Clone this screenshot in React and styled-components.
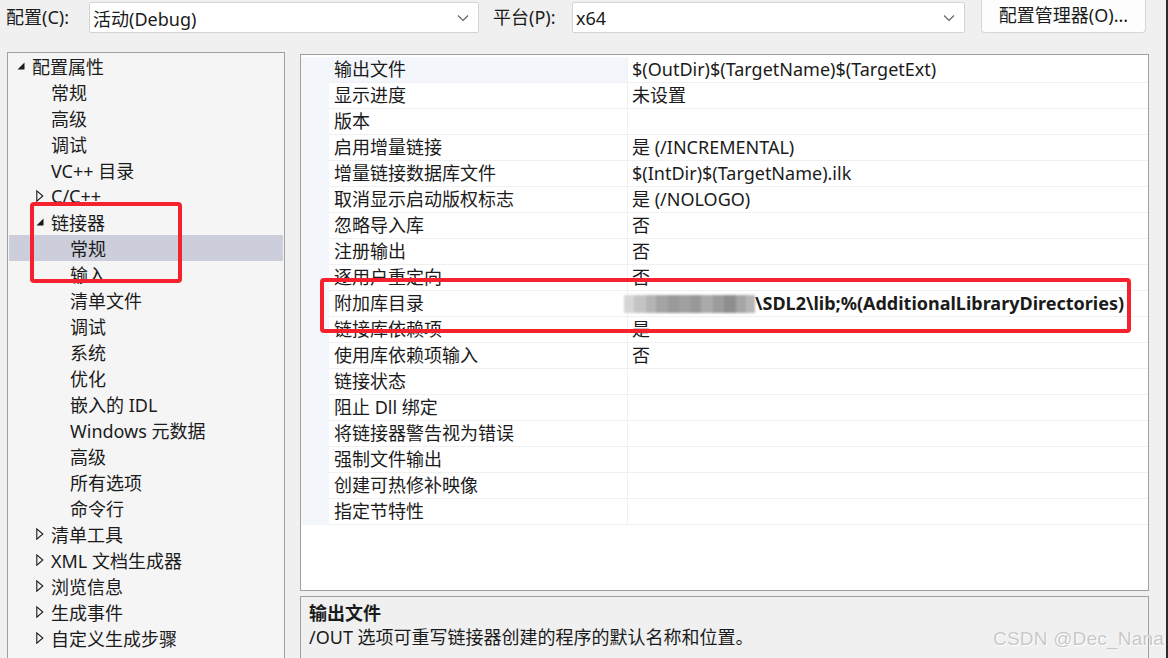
import React from 'react';
import styled, { createGlobalStyle } from 'styled-components';

const GlobalStyle = createGlobalStyle`
  html, body {
    margin: 0;
    padding: 0;
    background: #f0f0f0;
  }
  body {
    font-family: "Noto Sans", "Noto Sans CJK SC", sans-serif;
    color: #1b1b1b;
  }
`;

const Window = styled.div`
  position: relative;
  width: 1168px;
  height: 658px;
  overflow: hidden;
  background: #f0f0f0;
  box-sizing: border-box;
  border-right: 2px solid #2b2b2b;
  font-size: 18px;
`;

const TopBar = styled.div`
  display: flex;
  align-items: flex-start;
  height: 52px;
  padding-left: 6px;
`;

const Label = styled.div`
  height: 34px;
  line-height: 34px;
  width: ${p => p.w}px;
  padding-left: ${p => p.pl || 0}px;
  white-space: nowrap;
`;

const Combo = styled.div`
  display: flex;
  align-items: center;
  justify-content: space-between;
  box-sizing: border-box;
  margin-top: 2px;
  width: ${p => p.w}px;
  height: 31px;
  background: #fff;
  border: 1px solid #d4d4d4;
  border-radius: 2px;
  padding: 0 9px 0 3px;
`;

const Button = styled.div`
  box-sizing: border-box;
  margin-left: ${p => p.ml}px;
  width: 165px;
  height: 33px;
  line-height: 31px;
  text-align: center;
  background: #fdfdfd;
  border: 1px solid #d6d6d6;
  border-top: none;
  border-radius: 0 0 4px 4px;
`;

const Body = styled.div`
  display: flex;
  padding-left: 7px;
`;

const TreePanel = styled.div`
  box-sizing: border-box;
  width: 278px;
  height: 620px;
  background: #f5f5f5;
  border: 1px solid #a0a0a0;
  padding-top: 0;
`;

const TreeRow = styled.div`
  display: flex;
  align-items: center;
  height: 26px;
  margin: 0 1px;
  padding-left: ${p => 4 + p.level * 19}px;
  background: ${p => (p.selected ? '#cccedb' : 'transparent')};
  white-space: nowrap;
`;

const Arrow = styled.span`
  display: inline-flex;
  width: 19px;
  height: 26px;
  align-items: center;
  justify-content: flex-start;
  padding-left: 4px;
  box-sizing: border-box;
`;

const RightCol = styled.div`
  display: flex;
  flex-direction: column;
  gap: 5px;
  margin-left: 15px;
  margin-top: 2px;
  width: 849px;
`;

const Grid = styled.div`
  box-sizing: border-box;
  height: 537px;
  background: #fff;
  border: 1px solid #a0a0a0;
  padding-top: 2px;
  display: grid;
  grid-template-columns: 28px 299px 1fr;
  grid-auto-rows: 26px;
  align-content: start;
  position: relative;
`;

const Gutter = styled.div`
  background: #f3f6fb;
`;

const NameCell = styled.div`
  box-sizing: border-box;
  padding-left: 5px;
  line-height: 25px;
  border-bottom: 1px solid #f0f0f0;
  border-right: 1px solid #f0f0f0;
  background: ${p => (p.active ? '#f3f6fb' : '#fff')};
  white-space: nowrap;
`;

const ValueCell = styled.div`
  box-sizing: border-box;
  padding-left: 4px;
  line-height: 25px;
  border-bottom: 1px solid #f0f0f0;
  white-space: nowrap;
  font-weight: ${p => (p.bold ? 700 : 400)};
  display: flex;
  align-items: center;
`;

const Blurred = styled.span`
  display: inline-flex;
  height: 18px;
  margin-left: -8px;
  filter: blur(1.2px);
`;

const BlurBlock = styled.span`
  width: ${p => p.w}px;
  height: 18px;
  background: ${p => p.c};
`;

const Desc = styled.div`
  box-sizing: border-box;
  height: 70px;
  background: #f0f0f0;
  border: 1px solid #a0a0a0;
  padding: 4px 8px;
  line-height: 24px;
`;

const DescTitle = styled.div`
  font-weight: 700;
`;

const Highlight = styled.div`
  position: absolute;
  left: ${p => p.x}px;
  top: ${p => p.y}px;
  width: ${p => p.w}px;
  height: ${p => p.h}px;
  box-sizing: border-box;
  border: 4px solid #f5222d;
  border-radius: 4px;
  pointer-events: none;
`;

const Watermark = styled.div`
  position: absolute;
  right: 2px;
  bottom: 8px;
  font-family: "Liberation Sans", Arial, sans-serif;
  font-size: 19px;
  color: #c8c8c8;
  text-shadow: 0 0 1px #fff, 1px 1px 0 #fff;
  letter-spacing: 0.2px;
`;

const Chevron = () => (
  <svg width="12" height="8" viewBox="0 0 12 8">
    <path d="M1 1.5 L6 6.5 L11 1.5" fill="none" stroke="#606060" strokeWidth="1.1" />
  </svg>
);

const Expanded = () => (
  <svg width="8" height="8" viewBox="0 0 8 8">
    <path d="M7.5 0.5 L7.5 7.5 L0.5 7.5 Z" fill="#1b1b1b" />
  </svg>
);

const Collapsed = () => (
  <svg width="8" height="12" viewBox="0 0 8 12">
    <path d="M0.8 0.8 L6.8 6 L0.8 11.2 Z" fill="none" stroke="#1b1b1b" strokeWidth="1.1" />
  </svg>
);

const tree = [
  { t: '配置属性', level: 0, arrow: 'open' },
  { t: '常规', level: 1 },
  { t: '高级', level: 1 },
  { t: '调试', level: 1 },
  { t: 'VC++ 目录', level: 1 },
  { t: 'C/C++', level: 1, arrow: 'closed' },
  { t: '链接器', level: 1, arrow: 'open' },
  { t: '常规', level: 2, selected: true },
  { t: '输入', level: 2 },
  { t: '清单文件', level: 2 },
  { t: '调试', level: 2 },
  { t: '系统', level: 2 },
  { t: '优化', level: 2 },
  { t: '嵌入的 IDL', level: 2 },
  { t: 'Windows 元数据', level: 2 },
  { t: '高级', level: 2 },
  { t: '所有选项', level: 2 },
  { t: '命令行', level: 2 },
  { t: '清单工具', level: 1, arrow: 'closed' },
  { t: 'XML 文档生成器', level: 1, arrow: 'closed' },
  { t: '浏览信息', level: 1, arrow: 'closed' },
  { t: '生成事件', level: 1, arrow: 'closed' },
  { t: '自定义生成步骤', level: 1, arrow: 'closed' },
];

const props = [
  ['输出文件', '$(OutDir)$(TargetName)$(TargetExt)'],
  ['显示进度', '未设置'],
  ['版本', ''],
  ['启用增量链接', '是 (/INCREMENTAL)'],
  ['增量链接数据库文件', '$(IntDir)$(TargetName).ilk'],
  ['取消显示启动版权标志', '是 (/NOLOGO)'],
  ['忽略导入库', '否'],
  ['注册输出', '否'],
  ['逐用户重定向', '否'],
  ['附加库目录', 'blur'],
  ['链接库依赖项', '是'],
  ['使用库依赖项输入', '否'],
  ['链接状态', ''],
  ['阻止 Dll 绑定', ''],
  ['将链接器警告视为错误', ''],
  ['强制文件输出', ''],
  ['创建可热修补映像', ''],
  ['指定节特性', ''],
];

const blurBlocks = [
  [10, '#d6d6d6'], [12, '#c4c4c4'], [10, '#b4b4b4'], [12, '#a4a4a4'], [11, '#9a9a9a'],
  [12, '#a0a0a0'], [10, '#989898'], [12, '#aaaaaa'], [11, '#9c9c9c'], [12, '#8e8e8e'],
  [10, '#a6a6a6'], [9, '#b6b6b6'],
];

const App = () => {
  return (
    <Window>
      <GlobalStyle />
      <TopBar>
        <Label w={83}>配置(C):</Label>
        <Combo w={390}>
          <span>活动(Debug)</span>
          <Chevron />
        </Combo>
        <Label w={79} pl={14}>平台(P):</Label>
        <Combo w={393}>
          <span>x64</span>
          <Chevron />
        </Combo>
        <Button ml={16}>配置管理器(O)...</Button>
      </TopBar>
      <Body>
        <TreePanel>
          {tree.map((n, i) => (
            <TreeRow key={i} level={n.level} selected={n.selected}>
              <Arrow>
                {n.arrow === 'open' && <Expanded />}
                {n.arrow === 'closed' && <Collapsed />}
              </Arrow>
              {n.t}
            </TreeRow>
          ))}
        </TreePanel>
        <RightCol>
          <Grid>
            {props.map(([name, value], i) => (
              <React.Fragment key={i}>
                <Gutter />
                <NameCell active={i === 0}>{name}</NameCell>
                {value === 'blur' ? (
                  <ValueCell bold>
                    <Blurred>
                      {blurBlocks.map(([w, c], j) => (
                        <BlurBlock key={j} w={w} c={c} />
                      ))}
                    </Blurred>
                    \SDL2\lib;%(AdditionalLibraryDirectories)
                  </ValueCell>
                ) : (
                  <ValueCell>{value}</ValueCell>
                )}
              </React.Fragment>
            ))}
          </Grid>
          <Desc>
            <DescTitle>输出文件</DescTitle>
            <div>/OUT 选项可重写链接器创建的程序的默认名称和位置。</div>
          </Desc>
        </RightCol>
      </Body>
      <Highlight x={30} y={202} w={152} h={81} />
      <Highlight x={320} y={278} w={811} h={55} />
      <Watermark>CSDN @Dec_Nana</Watermark>
    </Window>
  );
};

export default App;
